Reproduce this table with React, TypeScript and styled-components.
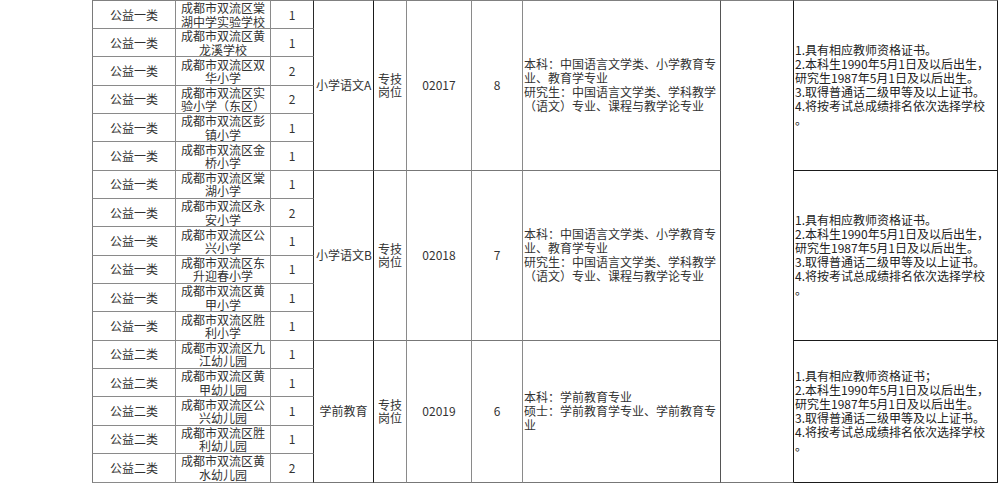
import React from 'react';
import styled, { createGlobalStyle } from 'styled-components';

// 招聘岗位表（截取片段）
type Group = {
    kind: string;
    schools: { name: string[]; count: string }[];
    subject: string;
    code: string;
    total: string;
    major: string[];
    notes: string[];
};

const columnWidths = [84, 95, 43, 60, 33, 65, 51, 198, 73, 204];

const notesA = [
    '1.具有相应教师资格证书。',
    '2.本科生1990年5月1日及以后出生，',
    '研究生1987年5月1日及以后出生。',
    '3.取得普通话二级甲等及以上证书。',
    '4.将按考试总成绩排名依次选择学校',
    '。',
];

const majorA = [
    '本科：中国语言文学类、小学教育专',
    '业、教育学专业',
    '研究生：中国语言文学类、学科教学',
    '（语文）专业、课程与教学论专业',
];

const groups: Group[] = [
    {
        kind: '公益一类',
        schools: [
            { name: ['成都市双流区棠', '湖中学实验学校'], count: '1' },
            { name: ['成都市双流区黄', '龙溪学校'], count: '1' },
            { name: ['成都市双流区双', '华小学'], count: '2' },
            { name: ['成都市双流区实', '验小学（东区）'], count: '2' },
            { name: ['成都市双流区彭', '镇小学'], count: '1' },
            { name: ['成都市双流区金', '桥小学'], count: '1' },
        ],
        subject: '小学语文A',
        code: '02017',
        total: '8',
        major: majorA,
        notes: notesA,
    },
    {
        kind: '公益一类',
        schools: [
            { name: ['成都市双流区棠', '湖小学'], count: '1' },
            { name: ['成都市双流区永', '安小学'], count: '2' },
            { name: ['成都市双流区公', '兴小学'], count: '1' },
            { name: ['成都市双流区东', '升迎春小学'], count: '1' },
            { name: ['成都市双流区黄', '甲小学'], count: '1' },
            { name: ['成都市双流区胜', '利小学'], count: '1' },
        ],
        subject: '小学语文B',
        code: '02018',
        total: '7',
        major: majorA,
        notes: notesA,
    },
    {
        kind: '公益二类',
        schools: [
            { name: ['成都市双流区九', '江幼儿园'], count: '1' },
            { name: ['成都市双流区黄', '甲幼儿园'], count: '1' },
            { name: ['成都市双流区公', '兴幼儿园'], count: '1' },
            { name: ['成都市双流区胜', '利幼儿园'], count: '1' },
            { name: ['成都市双流区黄', '水幼儿园'], count: '2' },
        ],
        subject: '学前教育',
        code: '02019',
        total: '6',
        major: ['本科：学前教育专业', '硕士：学前教育学专业、学前教育专', '业'],
        notes: ['1.具有相应教师资格证书；', ...notesA.slice(1)],
    },
];

const totalRows = groups.reduce((n, g) => n + g.schools.length, 0);

const App = () => {
    return (
        <Page>
            <GlobalStyle />
            <Sheet>
                <colgroup>
                    {columnWidths.map((w, i) => (
                        <Col key={i} $w={w} />
                    ))}
                </colgroup>
                <tbody>
                    {groups.map((g, gi) =>
                        g.schools.map((s, si) => (
                            <Row key={`${gi}-${si}`}>
                                <Cell>{g.kind}</Cell>
                                <Cell>
                                    <Lines>
                                        {s.name.map((l) => (
                                            <span key={l}>{l}</span>
                                        ))}
                                    </Lines>
                                </Cell>
                                <Cell $rb='#2a2a2a'>{s.count}</Cell>
                                {si === 0 && (
                                    <>
                                        <Cell rowSpan={g.schools.length} $rb='#1a1a1a' $bb='#777'>
                                            {g.subject}
                                        </Cell>
                                        <Cell rowSpan={g.schools.length} $bb='#777'>
                                            <Lines>
                                                <span>专技</span>
                                                <span>岗位</span>
                                            </Lines>
                                        </Cell>
                                        <Cell rowSpan={g.schools.length} $bb='#777'>{g.code}</Cell>
                                        <Cell rowSpan={g.schools.length} $bb='#777'>{g.total}</Cell>
                                        <Cell rowSpan={g.schools.length} $align='left' $rb='#555' $bb='#777'>
                                            <TextBlock>
                                                {g.major.map((l, i) => (
                                                    <span key={i}>{l}</span>
                                                ))}
                                            </TextBlock>
                                        </Cell>
                                        {gi === 0 && <BlankCell rowSpan={totalRows} />}
                                        <NoteCell rowSpan={g.schools.length}>
                                            <TextBlock>
                                                {g.notes.map((l, i) => (
                                                    <span key={i}>{l}</span>
                                                ))}
                                            </TextBlock>
                                        </NoteCell>
                                    </>
                                )}
                            </Row>
                        ))
                    )}
                </tbody>
            </Sheet>
        </Page>
    );
};

const GlobalStyle = createGlobalStyle`
    html, body {
        margin: 0;
        padding: 0;
        background: #fff;
    }
    body {
        font-family: "Noto Sans CJK SC", "Noto Sans", sans-serif;
        color: #333;
    }
`;

const Page = styled.div`
    width: 1000px;
    height: 485px;
    overflow: hidden;
    padding-left: 92px;
    box-sizing: border-box;
`;

const Sheet = styled.table`
    border-collapse: separate;
    border-spacing: 0;
    table-layout: fixed;
    width: 906px;
    font-size: 12px;
    line-height: 14px;

    tr:first-child > td {
        border-top: 1px solid #808080;
    }
    td:first-child {
        border-left: 1px solid #7a7a7a;
    }
`;

const Col = styled.col<{ $w: number }>`
    width: ${(p) => p.$w}px;
`;

const Row = styled.tr`
    height: 28.35px;
`;

const Cell = styled.td<{ $align?: 'left' | 'center'; $rb?: string; $bb?: string }>`
    border-right: 1px solid ${(p) => p.$rb || '#8a8a8a'};
    border-bottom: 1px solid ${(p) => p.$bb || '#8a8a8a'};
    padding: 0 ${(p) => (p.$align === 'left' ? '1px' : '2px')};
    text-align: ${(p) => p.$align || 'center'};
    vertical-align: middle;
    white-space: nowrap;
    overflow: visible;
`;

const BlankCell = styled.td`
    border-right: 1px solid #1a1a1a;
    border-bottom: 1px solid #777;
`;

const NoteCell = styled.td`
    border-right: 1px solid #1a1a1a;
    border-bottom: 1px solid #1a1a1a;
    tr:first-child > & {
        border-top-color: #1a1a1a;
    }
    padding: 0 1px;
    text-align: left;
    vertical-align: middle;
    white-space: nowrap;
    color: #222;
`;

const Lines = styled.div`
    height: 27px;
    display: flex;
    flex-direction: column;
    justify-content: center;
    align-items: center;
    line-height: 13.5px;
`;

const TextBlock = styled.div`
    display: flex;
    flex-direction: column;
    align-items: flex-start;
    line-height: 14px;
`;

export default App;
